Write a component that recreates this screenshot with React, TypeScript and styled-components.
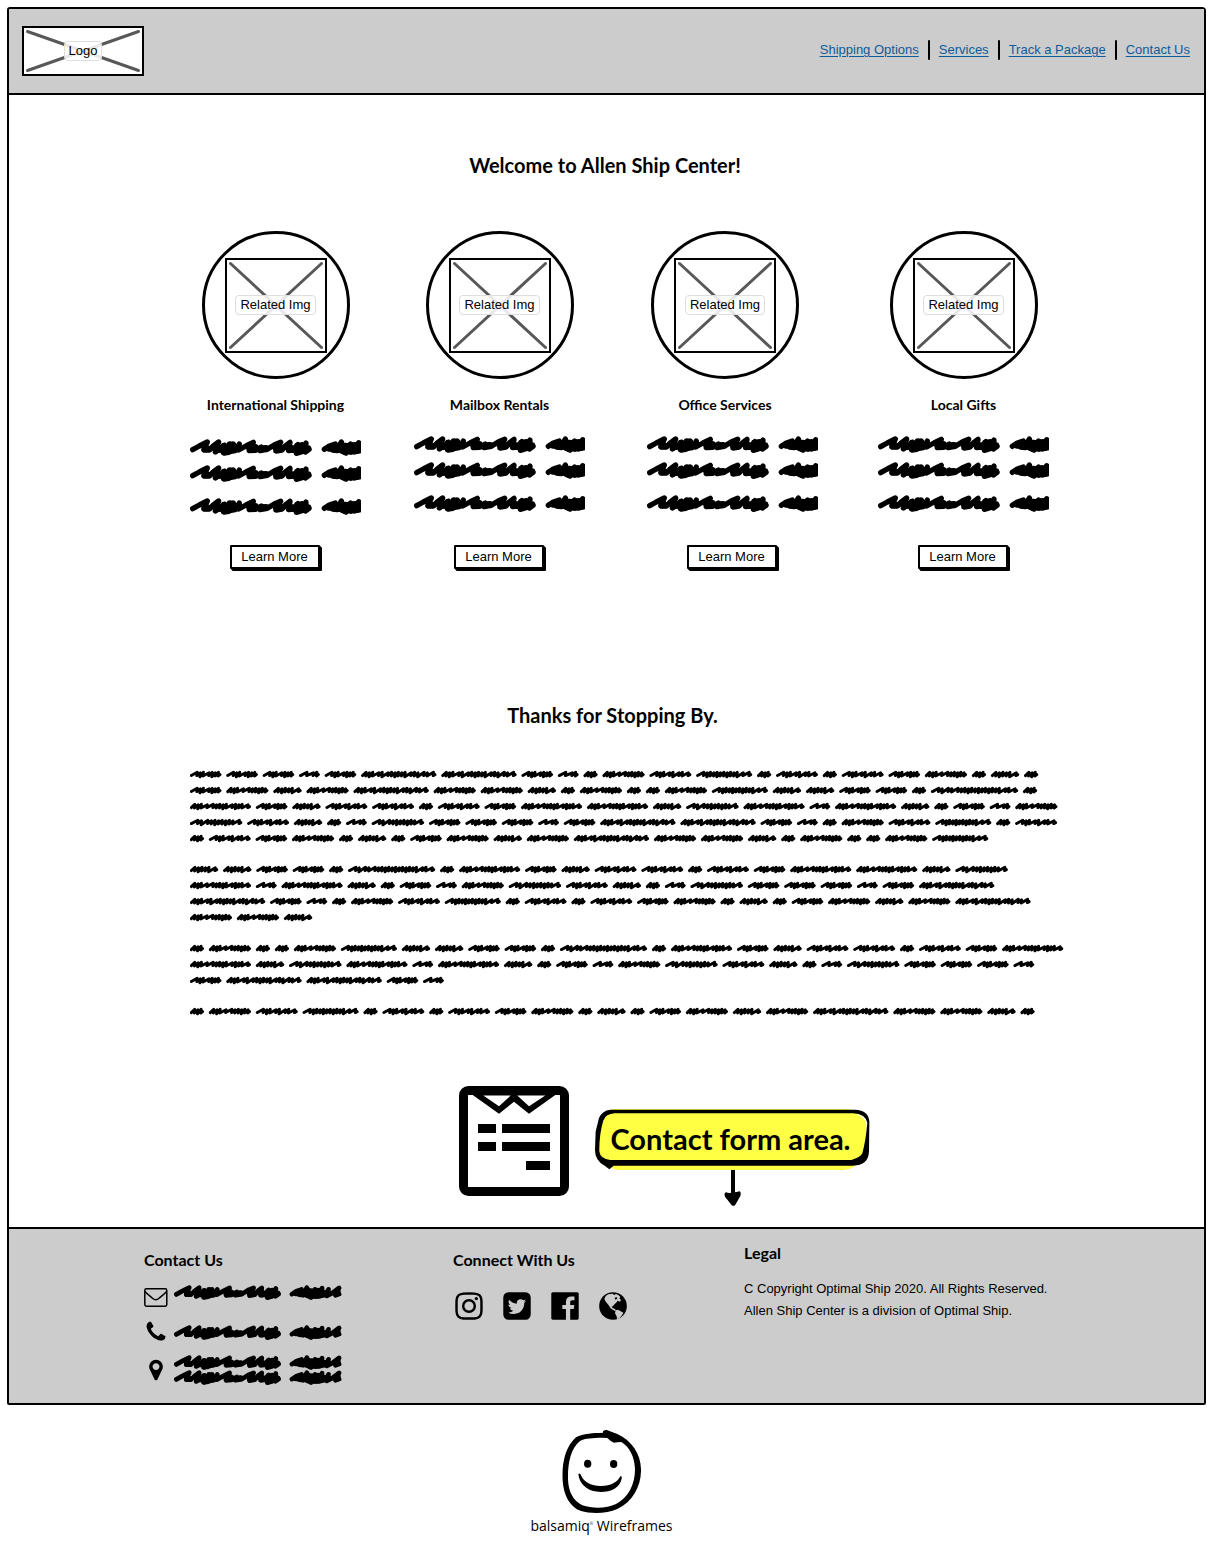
import React from "react";
import styled, { createGlobalStyle } from "styled-components";

const body = `"Liberation Sans", Arial, sans-serif`;
const heading = `Lato, "Liberation Sans", sans-serif`;
const grey = "#cccccc";

const GlobalStyle = createGlobalStyle`
  * { box-sizing: border-box; }
  body { margin: 0; background: #fff; color: #000; font: 13px/20px ${body}; }
  h1, h2, h3, p, ul { margin: 0; padding: 0; }
  ul { list-style: none; }
  svg { display: block; flex: none; }
`;

const Frame = styled.div`
  margin: 7px 5px 0 7px;
  border: 2px solid #000;
  border-radius: 3px 4px 2px 2px;
  display: flex;
  flex-direction: column;
`;

const Header = styled.header`
  display: flex;
  align-items: center;
  justify-content: space-between;
  padding: 17px 14px 17px 13px;
  background: ${grey};
  border-bottom: 2px solid #000;
`;

const Placeholder = styled.div<{ $w: number; $h: number }>`
  display: grid;
  place-items: center;
  width: ${(p) => p.$w}px;
  height: ${(p) => p.$h}px;
  border: 2px solid #000;
  background: #fff;
`;

const Cross = styled.svg`
  grid-area: 1 / 1;
  width: 100%;
  height: 100%;
  overflow: hidden;
  stroke: #585858;
  stroke-width: 3;
  stroke-linecap: round;
`;

const Caption = styled.span`
  grid-area: 1 / 1;
  padding: 0 4px;
  border: 1px solid #dedede;
  border-radius: 4px;
  background: rgba(255, 255, 255, 0.86);
  line-height: 18px;
  white-space: nowrap;
`;

const Nav = styled.nav`
  display: flex;
  align-items: center;
  gap: 9px;
  padding-bottom: 2px;
`;

const NavLink = styled.a`
  color: #0f5b99;
  text-decoration: underline;
  text-underline-offset: 2px;
  text-decoration-thickness: 1px;
`;

const Divider = styled.span`
  width: 2px;
  height: 20px;
  background: #000;
  border-radius: 1px;
`;

const Main = styled.main`
  padding: 58px 0 21px;
`;

const Title = styled.h1`
  font: 700 20px/24px ${heading};
  text-align: center;
  margin: 0 3px 54px 0;
`;

const Services = styled.section`
  display: grid;
  grid-template-columns: 224fr 233fr 231fr 171fr;
  padding: 0 155px 0 181px;
`;

const Card = styled.article`
  display: flex;
  flex-direction: column;
  align-items: center;
  width: 171px;
`;

const CardTop = styled.div<{ $shift: number }>`
  display: flex;
  flex-direction: column;
  align-items: center;
  gap: 16px;
  margin-right: ${(p) => p.$shift}px;
`;

const Circle = styled.div`
  display: grid;
  place-items: center;
  width: 148px;
  height: 148px;
  border: 3px solid #000;
  border-radius: 50%;
`;

const CardTitle = styled.h3`
  font: 700 14px/20px ${heading};
  white-space: nowrap;
`;

const Lines = styled.div<{ $top: number }>`
  display: grid;
  row-gap: 9px;
  padding: ${(p) => p.$top}px 0 30px;
  & > :last-child {
    margin-top: 7px;
  }
`;

const LearnMore = styled.button`
  margin: auto 2px 0 0;
  height: 24px;
  width: 90px;
  padding: 0;
  border: 2px solid #000;
  border-radius: 1px;
  background: #fff;
  color: #000;
  box-shadow: 1px 1px 0 #000, 2px 2px 0 #000;
  font: 13px/18px ${body};
  cursor: pointer;
`;

const Thanks = styled.h2`
  font: 700 20px/24px ${heading};
  text-align: center;
  margin: 134px 0 39px;
  padding-left: 12px;
`;

const Copy = styled.section`
  display: grid;
  row-gap: 15px;
  padding: 0 135px 0 181px;
`;

const ContactArea = styled.section`
  display: flex;
  justify-content: center;
  gap: 26px;
  margin-top: 67px;
  padding-left: 116px;
`;

const CalloutColumn = styled.div`
  display: flex;
  flex-direction: column;
  align-items: center;
  padding-top: 23px;
`;

const Callout = styled.div`
  display: grid;
  width: 275px;
  height: 61px;
`;

const CalloutShape = styled.svg`
  grid-area: 1 / 1;
  width: 100%;
  height: 100%;
`;

const CalloutText = styled.p`
  grid-area: 1 / 1;
  padding-right: 4px;
  text-align: center;
  font: 700 29px/60px ${heading};
  z-index: 1;
`;

const Footer = styled.footer`
  display: grid;
  grid-template-columns: 309fr 291fr 325fr;
  padding: 14px 135px 18px;
  background: ${grey};
  border-top: 2px solid #000;
`;

const FooterColumn = styled.section<{ $top?: number }>`
  padding-top: ${(p) => p.$top ?? 0}px;
`;

const FooterTitle = styled.h3<{ $gap: number }>`
  font: 700 16px/20px ${heading};
  margin-bottom: ${(p) => p.$gap}px;
`;

const ContactList = styled.ul`
  display: grid;
  row-gap: 11px;
`;

const ContactRow = styled.li<{ $align?: string }>`
  display: flex;
  align-items: ${(p) => p.$align ?? "center"};
  gap: 6px;
`;

const Social = styled.ul`
  display: flex;
  gap: 16px;
`;

const SocialLink = styled.a`
  display: block;
  color: #000;
`;

const Legal = styled.p`
  line-height: 22px;
  white-space: nowrap;
`;

const Credit = styled.div`
  display: flex;
  flex-direction: column;
  align-items: center;
  margin: 25px 8px 0 0;
`;

const CreditText = styled.p`
  margin-top: 2px;
  font: 14px/22px "Open Sans", "Noto Sans", sans-serif;
  sup {
    font-size: 4px;
    line-height: 4px;
  }
`;

/* ---------- scribbled text ---------- */

const BIG_FIRST =
  "M38 87 58 76 82 64 72 88 88 88 100 76 116 64 106 94 122 84 134 74 132 97 146 95 160 70 152 92 166 90 178 70 176 88 198 76 220 65 208 90 226 89 244 79 240 90 262 86 284 72 302 65 288 91 306 88 318 74 330 65 326 90 342 88 354 72 349 98 364 94 378 67 376 94 387 86";
const BIG_SECOND =
  "M433 86 448 76 466 70 458 88 472 90 484 64 486 92 498 97 512 70 512 94 524 92 536 66 532 92 548 88 558 70 552 92 572 82 594 65 582 90 594 86";
const BIG_CORE =
  "M74 85H84M104 80 108 86 150 88 172 80M150 72V90M132 76V94M208 82 226 80M244 84 258 83M288 82 302 82M322 76 326 84 384 84M352 76V92M366 74V90M446 83H456M464 80 550 82M484 70V88M498 76V94M512 74V92M524 74V92M580 80H590";

function Scribble({ clipped = false }: { clipped?: boolean }) {
  const [w, h, units] = clipped ? [171, 17, 513] : [168, 15, 574];
  return (
    <svg width={w} height={h} viewBox={`30 55 ${units} 51`} preserveAspectRatio="none" aria-hidden="true">
      <g fill="none" stroke="#000" strokeWidth="16" strokeLinecap="round" strokeLinejoin="round">
        <path d={BIG_FIRST} />
        <path d={BIG_SECOND} />
        <path d={BIG_CORE} strokeWidth="20" />
      </g>
    </svg>
  );
}

/* Each letter is one word shape: its width and its run of loose (n) and dense (m) strokes. */
const WORDS: Record<string, [number, string]> = {
  a: [14, "mmm"],
  b: [20.6, "nnm"],
  c: [28.2, "mmmmmn"],
  d: [31.4, "nmmnmmm"],
  e: [42, "mmmnnmmmmm"],
  f: [41.7, "nmmnmnmn"],
  g: [52.3, "nmnmmmmmmmn"],
  h: [55.9, "nmmmmmmmmmmnn"],
  i: [61, "mmmnnmmmmnmmmn"],
  k: [75.2, "mmmnmnmmmmmnmmnmn"],
  l: [87, "nmnmnmmmmmmmmmmmmnmn"],
};
const WORD_GAP = 5;

function wordPath(left: number, key: string) {
  const [width, strokes] = WORDS[key];
  const total = [...strokes].reduce((sum, s) => sum + (s === "n" ? 1.8 : 1), 0);
  const unit = (width - 4.4) / total;
  let x = left + 1.3;
  let d = `M${x.toFixed(1)} 9.6`;
  [...strokes].forEach((s, n) => {
    const step = unit * (s === "n" ? 1.8 : 1);
    const top = n % 2 ? 6.8 : 6.2;
    const low = s === "n" ? 9.6 : n % 3 === 1 ? 10.8 : 10;
    d += `L${(x + step + 0.2).toFixed(1)} ${top.toFixed(1)}L${(x + step - 0.2).toFixed(1)} ${low.toFixed(1)}`;
    x += step;
  });
  return `${d}L${(left + width - 1.4).toFixed(1)} 8.6`;
}

function ScribbleLine({ words }: { words: string }) {
  let x = 0;
  const d = [...words]
    .map((key) => {
      const path = wordPath(x, key);
      x += WORDS[key][0] + WORD_GAP;
      return path;
    })
    .join("");
  return (
    <svg width={Math.ceil(x)} height="16" aria-hidden="true">
      <path d={d} fill="none" stroke="#000" strokeWidth="2.9" strokeLinecap="round" strokeLinejoin="round" />
    </svg>
  );
}

const PARAGRAPHS = [
  ["dddbdkkdbaefhafafdeaca", "decekeecaeaaehccddala", "idcffafdiicgibicadbe", "gfcabgdddbdkkdbaefhaf", "afdeacadecekeecaeaaeh"],
  ["ccddalaidcffafdiicg", "ibicadbegfcabgdddbdk", "kdbaefhafafdeacadecek", "eec"],
  ["aeaaehccddalaidcffafdi", "icgibicadbegfcabgdddb", "dkkdb"],
  ["aefhafafdeacadecekeeca"],
];

/* ---------- drawings ---------- */

const Glyph = ({ size, d }: { size: number; d: string }) => (
  <svg width={size} height={size} viewBox="0 0 1792 1792" fill="currentColor" aria-hidden="true">
    <path d={d} />
  </svg>
);

const PHONE =
  "M1600 1240q0 27-10 70.5t-21 68.5q-21 50-122 106-94 51-186 51-27 0-53-3.5t-57.5-12.5-47-14.5-55.5-20.5-49-18q-98-35-175-83-127-79-264-216t-216-264q-48-77-83-175-3-9-18-49t-20.5-55.5-14.5-47-12.5-57.5-3.5-53q0-92 51-186 56-101 106-122 25-11 68.5-21t70.5-10q14 0 21 3 18 6 53 76 11 19 30 54t35 63.5 31 53.5q3 4 17.5 25t21.5 35.5 7 28.5q0 20-28.5 50t-62 55-62 53-28.5 46q0 9 5 22.5t8.5 20.5 14 24 11.5 19q76 137 174 235t235 174q2 1 19 11.5t24 14 20.5 8.5 22.5 5q18 0 46-28.5t53-62 55-62 50-28.5q14 0 28.5 7t35.5 21.5 25 17.5q25 15 53.5 31t63.5 35 54 30q70 35 76 53 3 7 3 21z";
const MARKER =
  "M1152 640q0-106-75-181t-181-75-181 75-75 181 75 181 181 75 181-75 75-181zm256 0q0 109-33 179l-364 774q-16 33-47.5 52t-67.5 19-67.5-19-46.5-52l-365-774q-33-70-33-179 0-212 150-362t362-150 362 150 150 362z";
const INSTAGRAM =
  "M1152 896q0-106-75-181t-181-75-181 75-75 181 75 181 181 75 181-75 75-181zm138 0q0 164-115 279t-279 115-279-115-115-279 115-279 279-115 279 115 115 279zm108-410q0 38-27 65t-65 27-65-27-27-65 27-65 65-27 65 27 27 65zm-502-220q-7 0-76.5-.5t-105.5 0-96.5 3-103 10-71.5 18.5q-50 20-88 58t-58 88q-11 29-18.5 71.5t-10 103-3 96.5 0 105.5.5 76.5-.5 76.5 0 105.5 3 96.5 10 103 18.5 71.5q20 50 58 88t88 58q29 11 71.5 18.5t103 10 96.5 3 105.5 0 76.5-.5 76.5.5 105.5 0 96.5-3 103-10 71.5-18.5q50-20 88-58t58-88q11-29 18.5-71.5t10-103 3-96.5 0-105.5-.5-76.5.5-76.5 0-105.5-3-96.5-10-103-18.5-71.5q-20-50-58-88t-88-58q-29-11-71.5-18.5t-103-10-96.5-3-105.5 0-76.5.5zm768 630q0 229-5 317-10 208-124 322t-322 124q-88 5-317 5t-317-5q-208-10-322-124t-124-322q-5-88-5-317t5-317q10-208 124-322t322-124q88-5 317-5t317 5q208 10 322 124t124 322q5 88 5 317z";
const TWITTER =
  "M1408 610q-56 25-121 34 68-40 93-117-65 38-134 51-61-66-153-66-87 0-148.5 61.5t-61.5 148.5q0 29 5 48-129-7-242-65t-192-155q-29 50-29 106 0 114 91 175-47-1-100-26v2q0 75 50 133.5t123 72.5q-29 8-51 8-13 0-39-4 21 63 74.5 104t121.5 42q-116 90-261 90-26 0-50-3 148 94 322 94 112 0 210-35.5t168-95 120.5-137 75-162 24.5-168.5q0-18-1-27 63-45 105-109zm256-194v960q0 119-84.5 203.5t-203.5 84.5h-960q-119 0-203.5-84.5t-84.5-203.5v-960q0-119 84.5-203.5t203.5-84.5h960q119 0 203.5 84.5t84.5 203.5z";
const FACEBOOK =
  "M1579 128q35 0 60 25t25 60v1366q0 35-25 60t-60 25h-391v-595h199l30-232h-229v-148q0-56 23.5-84t91.5-28l122-1v-207q-63-9-178-9-136 0-217.5 80t-81.5 226v171h-200v232h200v595h-735q-35 0-60-25t-25-60v-1366q0-35 25-60t60-25h1366z";

const Globe = () => (
  <svg width="32" height="32" viewBox="470 178 96 96" aria-hidden="true">
    <circle cx="518" cy="226" r="41.5" />
    <g fill={grey}>
      <path d="M496 196 504 191 516 189 522 193 527 190 535 194 540 199 537 203 542 208 539 213 532 210 529 215 524 219 518 226 514 228 517 232 522 234 527 238 525 241 518 238 511 233 505 224 500 218 495 211 492 204 495 199Z" />
      <path d="M526 239 532 237 540 241 549 246 546 252 541 258 535 264 530 265 529 257 524 248Z" />
    </g>
    <path d="M523 201 529 199 531 204 525 207Z" />
  </svg>
);

const Envelope = () => (
  <svg width="24" height="24" viewBox="0 0 24 24" fill="none" stroke="#000" strokeWidth="1.5" strokeLinejoin="round" aria-hidden="true">
    <rect x="0.8" y="3.8" width="22" height="17.4" rx="1.6" />
    <path d="M1 6.5C3 9 6 11 8.500 13.200C10.500 15 13 15 15 13.200C17.500 11 20.500 9 22.600 6.500" />
  </svg>
);

const FormIcon = () => (
  <svg width="110" height="110" viewBox="0 0 110 110" role="img" aria-label="Form">
    <rect x="4.500" y="4.500" width="101" height="101" rx="5" fill="#fff" stroke="#000" strokeWidth="9" />
    <path d="M13 8.500 40 27.700 55 15.700 70 27.700 97 8.500Z" />
    <path fill="#fff" d="M24.300 9.600H51.700L40 20.300ZM58.300 9.600H86.300L70 20.300Z" />
    <path d="M19 38h18v9h-18zM43 38h48v9h-48zM19 56h18v9h-18zM43 56h48v9h-48zM67 75h24v9h-24z" />
  </svg>
);

const Arrow = () => (
  <svg width="18" height="36" viewBox="849 300 54 108" aria-hidden="true">
    <path d="M870 300H882L882 367Q890 366 896 364Q901 366 898 378L883 404Q877 411 871 404L852 380Q848 370 855 367Q863 370 870 368Z" />
  </svg>
);

const Smiley = () => (
  <svg width="79" height="83" viewBox="186 60 237 249" role="img" aria-label="Smiling face">
    <path
      fillRule="evenodd"
      d="M309 64Q316 57 326 62L352 72C395 92 422 130 423 178C424 228 398 275 352 297C320 312 270 311 243 303C208 290 191 255 188 212C185 160 196 110 228 82C250 70 280 69 309 68ZM306 83C278 84 256 84 240 93C212 115 203 160 204 208C205 245 219 272 247 286C280 297 322 295 348 282C385 262 405 225 405 178C404 142 390 112 364 96Q350 97 342 98Q330 93 322 84Z"
    />
    <ellipse cx="263" cy="161" rx="11" ry="12" />
    <ellipse cx="341" cy="162" rx="11" ry="12" />
    <path d="M235 192Q240 187 243 196C252 218 278 229 304 228C332 227 352 216 360 200Q366 194 365 206C360 232 334 246 302 246C266 245 238 226 235 192Z" />
  </svg>
);

function ImageBox({ w, h, label }: { w: number; h: number; label: string }) {
  const iw = w - 4;
  const ih = h - 4;
  return (
    <Placeholder $w={w} $h={h}>
      <Cross viewBox={`0 0 ${iw} ${ih}`} aria-hidden="true">
        <path d={`M3.500 3.500 ${iw - 3.5} ${ih - 3.5}M${iw - 3.5} 3.500 3.500 ${ih - 3.5}`} />
      </Cross>
      <Caption>{label}</Caption>
    </Placeholder>
  );
}

const LINKS = ["Shipping Options", "Services", "Track a Package", "Contact Us"];

const CARDS = [
  { title: "International Shipping", top: 24, shift: 0 },
  { title: "Mailbox Rentals", top: 21, shift: 0 },
  { title: "Office Services", top: 21, shift: 15 },
  { title: "Local Gifts", top: 21, shift: 0 },
];

const SOCIAL = [
  { name: "Instagram", icon: <Glyph size={32} d={INSTAGRAM} /> },
  { name: "Twitter", icon: <Glyph size={32} d={TWITTER} /> },
  { name: "Facebook", icon: <Glyph size={32} d={FACEBOOK} /> },
  { name: "Website", icon: <Globe /> },
];

export default function App() {
  return (
    <>
      <GlobalStyle />
      <Frame>
        <Header>
          <ImageBox w={122} h={50} label="Logo" />
          <Nav>
            {LINKS.map((link, i) => (
              <React.Fragment key={link}>
                {i > 0 && <Divider />}
                <NavLink href="#">{link}</NavLink>
              </React.Fragment>
            ))}
          </Nav>
        </Header>

        <Main>
          <Title>Welcome to Allen Ship Center!</Title>
          <Services>
            {CARDS.map((card) => (
              <Card key={card.title}>
                <CardTop $shift={card.shift}>
                  <Circle>
                    <ImageBox w={102} h={95} label="Related Img" />
                  </Circle>
                  <CardTitle>{card.title}</CardTitle>
                </CardTop>
                <Lines $top={card.top}>
                  <Scribble clipped />
                  <Scribble clipped />
                  <Scribble clipped />
                </Lines>
                <LearnMore type="button">Learn More</LearnMore>
              </Card>
            ))}
          </Services>

          <Thanks>Thanks for Stopping By.</Thanks>
          <Copy>
            {PARAGRAPHS.map((lines, i) => (
              <div key={i}>
                {lines.map((line, j) => (
                  <ScribbleLine key={j} words={line} />
                ))}
              </div>
            ))}
          </Copy>

          <ContactArea>
            <FormIcon />
            <CalloutColumn>
              <Callout>
                <CalloutShape viewBox="466 118 825 182" preserveAspectRatio="none" aria-hidden="true">
                  <path
                    fill="#ffff43"
                    d="M520 118H1225Q1262 122 1276 150Q1284 165 1277 215L1265 262Q1250 300 1205 300H540Q515 299 505 285Q472 262 474 215L484 150Q495 120 520 118Z"
                  />
                  <path
                    fillRule="evenodd"
                    d="M512 120H1245Q1290 122 1289 160L1288 245Q1286 287 1240 287H522L509 298L495 287Q466 272 466 240L468 185L478 145Q488 122 512 120ZM525 131Q498 133 491 152Q478 195 479 245Q482 268 512 270H1235Q1262 262 1268 250Q1278 215 1283 160Q1278 133 1240 131Z"
                  />
                  <path fill="#fff" d="M1248 133Q1276 136 1282 158Q1268 140 1248 133Z" />
                </CalloutShape>
                <CalloutText>Contact form area.</CalloutText>
              </Callout>
              <Arrow />
            </CalloutColumn>
          </ContactArea>
        </Main>

        <Footer>
          <FooterColumn $top={7}>
            <FooterTitle $gap={15}>Contact Us</FooterTitle>
            <ContactList>
              <ContactRow $align="flex-start">
                <Envelope />
                <Scribble />
              </ContactRow>
              <ContactRow>
                <Glyph size={24} d={PHONE} />
                <Scribble />
              </ContactRow>
              <ContactRow>
                <Glyph size={24} d={MARKER} />
                <div>
                  <Scribble />
                  <Scribble />
                </div>
              </ContactRow>
            </ContactList>
          </FooterColumn>
          <FooterColumn $top={7}>
            <FooterTitle $gap={20}>Connect With Us</FooterTitle>
            <Social>
              {SOCIAL.map((item) => (
                <li key={item.name}>
                  <SocialLink href="#" aria-label={item.name}>
                    {item.icon}
                  </SocialLink>
                </li>
              ))}
            </Social>
          </FooterColumn>
          <FooterColumn>
            <FooterTitle $gap={15}>Legal</FooterTitle>
            <Legal>C Copyright Optimal Ship 2020. All Rights Reserved.</Legal>
            <Legal>Allen Ship Center is a division of Optimal Ship.</Legal>
          </FooterColumn>
        </Footer>
      </Frame>

      <Credit>
        <Smiley />
        <CreditText>
          balsamiq<sup>®</sup> Wireframes
        </CreditText>
      </Credit>
    </>
  );
}
